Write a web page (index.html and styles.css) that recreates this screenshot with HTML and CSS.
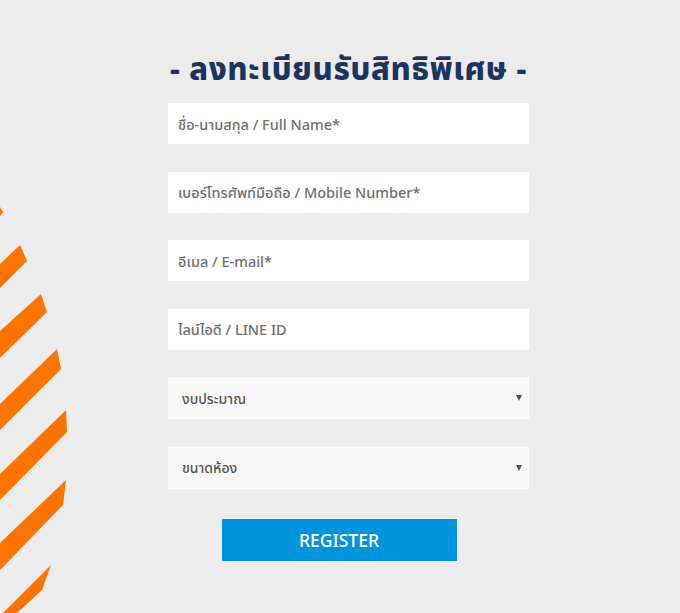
FILE: index.html
```html
<!DOCTYPE html>
<html lang="th">
<head>
    <meta charset="UTF-8">
    <meta name="viewport" content="width=device-width, initial-scale=1.0">
    <title>ลงทะเบียนรับสิทธิพิเศษ</title>
    <link rel="stylesheet" href="styles.css">
</head>
<body>

    <svg class="stripes" width="80" height="613" viewBox="0 0 80 613">
        <polygon points="0,207 3,212 0,216" />
        <polygon points="0,264 20,245 27,261 0,288" />
        <polygon points="0,331 41,294 47,312 0,358" />
        <polygon points="0,404 57,349 61,369 0,430" />
        <polygon points="0,474 66,410 67,432 0,500" />
        <polygon points="0,543 66,480 63,505 0,570" />
        <polygon points="3,613 51,565 42,590 17,613" />
    </svg>

    <div class="page">
        <form class="register" onsubmit="return false">
            <h1>- ลงทะเบียนรับสิทธิพิเศษ -</h1>

            <input type="text" placeholder="ชื่อ-นามสกุล / Full Name*">
            <input type="tel" placeholder="เบอร์โทรศัพท์มือถือ / Mobile Number*">
            <input type="email" placeholder="อีเมล / E-mail*">
            <input type="text" placeholder="ไลน์ไอดี / LINE ID">

            <div class="select-wrap">
                <select>
                    <option>งบประมาณ</option>
                </select>
            </div>
            <div class="select-wrap">
                <select>
                    <option>ขนาดห้อง</option>
                </select>
            </div>

            <button type="submit">REGISTER</button>
        </form>
    </div>

</body>
</html>
```

FILE: styles.css
```css
body {
    font-family: "Noto Sans", "Noto Sans Thai", sans-serif;
    background-color: #ececec;
    margin: 0;
    padding: 0;
    height: 613px;
    overflow: hidden;
}

.stripes {
    position: absolute;
    left: 0;
    top: 0;
}

.stripes polygon {
    fill: #ff7300;
}

.page {
    display: flex;
    justify-content: center;
    padding-left: 17px;
}

.register {
    width: 361px;
    display: flex;
    flex-direction: column;
    gap: 27.6px;
}

h1 {
    margin: 52px 0 -9.6px;
    height: 33px;
    line-height: 33px;
    text-align: center;
    font-size: 31px;
    font-weight: 800;
    color: #1c3560;
    white-space: nowrap;
    letter-spacing: 0.7px;
}

input, select {
    box-sizing: border-box;
    width: 100%;
    height: 41px;
    border: none;
    outline: none;
    background-color: #fff;
    padding: 0 10px;
    font-family: inherit;
    font-size: 14.5px;
    font-weight: 500;
    color: #666;
}

input::placeholder {
    color: #707070;
}

.select-wrap {
    position: relative;
}

select {
    height: 42px;
    background-color: #f9f9f9;
    padding: 0 14px;
    appearance: none;
    -webkit-appearance: none;
    font-size: 14px;
    color: #555;
}

.select-wrap::after {
    content: "";
    position: absolute;
    right: 7px;
    top: 18px;
    border-left: 3px solid transparent;
    border-right: 3px solid transparent;
    border-top: 6px solid #555;
}

button {
    align-self: center;
    width: 235px;
    height: 42px;
    margin-top: 2px;
    margin-left: -19px;
    background-color: #0094da;
    color: white;
    border: none;
    cursor: pointer;
    font-family: inherit;
    font-size: 17.5px;
    font-weight: 500;
}
```
